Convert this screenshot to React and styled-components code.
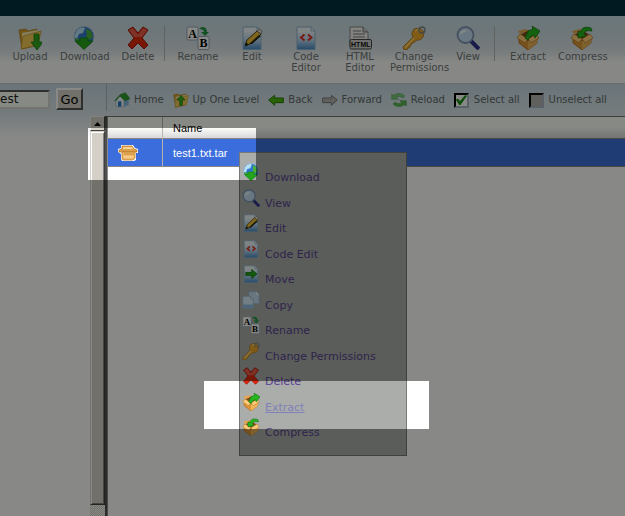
import React from 'react'
import styled, { createGlobalStyle, css } from 'styled-components'

const GlobalStyle = createGlobalStyle`
  * {
    box-sizing: border-box;
  }
  body {
    margin: 0;
    font-family: Verdana, "DejaVu Sans", sans-serif;
    font-size: 10px;
    color: #6e7478;
    background-color: #ffffff;
  }
`

const Page = styled.div`
  position: relative;
  display: flex;
  flex-direction: column;
  min-height: 100vh;
  overflow: hidden;
`

const TitleBar = styled.header`
  height: 16px;
  background-color: #002d3e;
`

const Toolbar = styled.nav`
  display: flex;
  align-items: flex-start;
  height: 68px;
  padding: 10px 0 0 3px;
  border-bottom: 1px solid #c4c9ca;
  background: linear-gradient(#c8dfe8 0px, #cddce6 16px, #dde4e9 34px, #fefefc 47px);
`

const ToolButton = styled.button`
  width: 54px;
  padding: 0 3px;
  border: none;
  background: none;
  font: inherit;
  line-height: 11px;
  color: inherit;
  text-align: center;
  cursor: pointer;

  svg {
    display: block;
    margin: 0 auto 1px;
  }
`

const ToolSeparator = styled.div`
  width: 1px;
  height: 35px;
  margin: 0 6px 0 -1px;
  background-color: #b4b8b4;
`

const NavRow = styled.div`
  display: flex;
  height: 32px;
  background: linear-gradient(#c6d8e4, #dde6ec);
`

const PathForm = styled.form`
  display: flex;
  align-items: center;
  gap: 6px;
  width: 106px;
  padding-bottom: 2px;
`

const PathInput = styled.input`
  width: 50px;
  height: 19px;
  padding: 0;
  border: 2px solid;
  border-left: none;
  border-color: #555 #d8d8d2 #d8d8d2;
  border-radius: 0;
  background-color: #fdfffb;
  font: inherit;
  font-size: 12px;
  color: #222;
`

const GoButton = styled.button`
  width: 27px;
  height: 22px;
  padding: 0;
  border: 2px solid;
  border-color: #ffffff #555 #555 #ffffff;
  background-color: #d4d0c8;
  font: inherit;
  font-size: 13px;
  color: #000;
`

const NavLinks = styled.div`
  display: flex;
  flex: 1;
  align-items: center;
  gap: 9px;
  height: 27px;
  padding: 5px 0 0 7px;
  border-left: 1px solid #a8b4ba;
`

const itemStyle = css`
  display: flex;
  align-items: center;
  gap: 4px;
  color: #5f666a;
  line-height: 16px;
  white-space: nowrap;
  text-decoration: none;
`

const NavLink = styled.a`
  ${itemStyle}
`

const CheckLabel = styled.label`
  ${itemStyle}
  gap: 5px;
`

const CheckBox = styled.input`
  appearance: none;
  display: grid;
  place-items: center;
  width: 15px;
  height: 15px;
  margin: 0;
  border: 2px solid;
  border-color: #000 #a9b4c4 #a9b4c4 #000;
  background-color: ${props => (props.$filled ? '#b4b4ae' : '#fdfffb')};

  &:checked::after {
    content: "";
    width: 11px;
    height: 11px;
    background-color: #189018;
    clip-path: polygon(0 45%, 20% 38%, 38% 60%, 85% 4%, 100% 14%, 42% 96%, 30% 96%);
  }
`

const Body = styled.div`
  display: flex;
  flex: 1;
`

const Sidebar = styled.aside`
  width: 90px;
  background: linear-gradient(#dde6ec, #ffffff 22px);
`

const ScrollBar = styled.div`
  display: flex;
  flex-direction: column;
  width: 17px;
  padding-bottom: 11px;
  border-right: 2px solid #505050;
  background: repeating-conic-gradient(#d4d0c8 0 25%, #ffffff 0 50%) 0 0 / 2px 2px;
`

const ScrollUp = styled.button`
  height: 15px;
  padding: 0;
  border: 1px solid;
  border-color: #f4f4f0 #444 #444 #f4f4f0;
  background-color: #d4d0c8;

  svg {
    display: block;
    margin: 0 auto;
  }
`

const ScrollThumb = styled.div`
  flex: 1;
  border: 1px solid;
  border-color: #d4d0c8 #404040 #404040 #d4d0c8;
  background-color: #d4d0c8;
  box-shadow: inset 1px 1px #ffffff, inset -1px -1px #808080;
`

const Content = styled.main`
  flex: 1;
  border-top: 1px solid #707878;
  border-left: 1px solid #8c8c88;
`

const FileTable = styled.table`
  width: 100%;
  border-collapse: separate;
  border-spacing: 0;
  table-layout: fixed;
  font-family: "Liberation Sans", Arial, sans-serif;
  font-size: 11px;
  text-align: left;

  tr > :first-child {
    width: 55px;
    padding-left: 10px;
    border-right: 1px solid #b8b4ac;
  }
`

const HeadCell = styled.th`
  height: 22px;
  padding: 0 10px;
  border-bottom: 1px solid #8c8680;
  background: linear-gradient(#fdfffb 50%, #d8d8da);
  font-weight: normal;
  color: #000;
`

const Cell = styled.td`
  height: 28px;
  padding: 0 10px;
  border-bottom: 1px solid #8c8680;
  background-color: #3b6edc;
  color: #fff;

  svg {
    display: block;
  }
`

const ContextMenu = styled.ul`
  position: absolute;
  top: 152px;
  left: 239px;
  width: 168px;
  margin: 0;
  padding: 10px 2px 11px;
  border: 1px solid #787878;
  background-color: #abadaa;
  list-style: none;
`

const MenuItem = styled.li`
  height: 26px;

  &:nth-child(even) {
    height: 25px;
  }
`

const MenuLink = styled.a`
  display: flex;
  align-items: baseline;
  gap: 5px;
  font-size: 11px;
  line-height: 16px;
  white-space: nowrap;
  color: ${props => (props.$active ? '#7f81b8' : '#573f90')};
  text-decoration: none;

  span {
    text-decoration: ${props => (props.$active ? 'underline' : 'none')};
  }
`

/* darkens everything except the selected file and the Extract entry */
const Shade = styled.div`
  position: absolute;
  inset: 0;
  pointer-events: none;
  background-color: rgba(2, 5, 0, 0.47);
  clip-path: polygon(
    evenodd,
    0 0, 100% 0, 100% 100%, 0 100%, 0 0,
    88px 128px, 256px 128px, 256px 180px, 88px 180px, 88px 128px,
    0 0,
    204px 381px, 429px 381px, 429px 429px, 204px 429px, 204px 381px,
    0 0
  );
`

const Sheet = ({ children }) => (
  <>
    <defs>
      <linearGradient id="sheet" x1="0" y1="0" x2="0" y2="1">
        <stop offset="0.2" stopColor="#eef5fb" />
        <stop offset="0.6" stopColor="#b4d2ee" />
        <stop offset="1" stopColor="#4488c8" />
      </linearGradient>
    </defs>
    <path d="M3 1h14l4 4v18.500H3z" fill="url(#sheet)" stroke="#8fb0cc" />
    <path d="M17 1v4h4z" fill="#fff" stroke="#8fb0cc" />
    {children}
  </>
)

const Box = () => (
  <>
    <path d="M3 10l9 5 9-5v7l-9 7-9-7z" fill="#dd9538" stroke="#a8681c" strokeWidth=".8" />
    <path d="M12 15v9l9-7v-7z" fill="#efb458" />
    <path d="M4 9l8-5 8 5-8 6z" fill="#7d4c18" />
    <path d="M4 8L1 12l8 5 3-4z" fill="#ffcc7c" stroke="#b87828" strokeWidth=".7" />
    <path d="M20 8l3 4-8 5-3-4z" fill="#ffcc7c" stroke="#b87828" strokeWidth=".7" />
    <path d="M4 8l-2-3 8-2 2 2z" fill="#e8a44c" />
  </>
)

const Folder = () => (
  <>
    <path d="M1 4l7-1 2 2 9-2v3l-2 14-13 3z" fill="#d59b28" stroke="#a87818" strokeWidth=".7" />
    <path d="M4 7l16-3v14l-16 4z" fill="#f8ecb4" />
    <path d="M5 10l18-5-3 14-17 4z" fill="#f5cb58" stroke="#c08c20" strokeWidth=".7" />
  </>
)

const icons = {
  upload: (
    <>
      <Folder />
      <path d="M16 8h5v8h4l-6 8-6-8h3z" fill="#2fa51f" stroke="#187a10" strokeWidth=".8" />
    </>
  ),
  upLevel: (
    <>
      <Folder />
      <path d="M12 5l6 7h-4v8h-4v-8H6z" fill="#38b020" stroke="#187a10" />
    </>
  ),
  download: (
    <>
      <circle cx="12" cy="10.500" r="10" fill="#2f78cc" stroke="#a8c0d8" />
      <path d="M4 6c3-5 7-5 9-4l-2 5-4 1-2 5-3-2z" fill="#b8e0f8" />
      <path d="M14 3l5 2 2 6-4 3-3-3 1-3zM3 12l4 1 1 5-3-1z" fill="#4caf38" />
      <path d="M8 12h8v3h5l-9 8.500L3 15h5z" fill="#24a51c" stroke="#128010" strokeWidth=".8" />
    </>
  ),
  remove: (
    <>
      <path d="M2 4l5-3 5 6 5-6 5 3-6 8 6 7-4 4-6-6-6 6-4-4 6-7z" fill="#e2280c" stroke="#a01408" />
      <path d="M3 4l4-2 5 7 5-7 4 2-5 7H8z" fill="#ee7466" opacity=".7" />
    </>
  ),
  rename: (
    <>
      <rect x="1" y="1" width="11" height="13" rx="1" fill="#fff" stroke="#9aa6b8" />
      <rect x="12" y="10.500" width="11" height="13" rx="1" fill="#fff" stroke="#9aa6b8" />
      <text x="6.500" y="11.500" fontFamily="Liberation Serif, serif" fontSize="12" fontWeight="bold" textAnchor="middle" fill="#000">A</text>
      <text x="17.500" y="21" fontFamily="Liberation Serif, serif" fontSize="12" fontWeight="bold" textAnchor="middle" fill="#000">B</text>
      <path d="M13 3c4-4 8-1 8 3h2l-4 4-4-4h3c0-2-2-3-5-3z" fill="#259848" />
    </>
  ),
  edit: (
    <Sheet>
      <path d="M5 20l2-6L17 5l4 3-9 9z" fill="#f0bc38" stroke="#51400c" />
      <path d="M17 5l2-2 3 2-1 3z" fill="#f0e4d4" stroke="#555" strokeWidth=".6" />
      <path d="M5 20l1-4 3 3zM9 18l10-9 2 1-9 8z" fill="#252014" />
    </Sheet>
  ),
  code: (
    <Sheet>
      <path d="M10.500 8.500L7 11.500l3.500 3M14 8.500l3.500 3-3.500 3" fill="none" stroke="#e02818" strokeWidth="1.800" />
    </Sheet>
  ),
  html: (
    <>
      <path d="M2 1h13l5 5v14H2z" fill="#f4f4f4" stroke="#888" />
      <path d="M15 1v5h5" fill="#ccc" stroke="#777" />
      <path d="M5 5h8M5 8h12M5 11h12" stroke="#a0a0a0" strokeWidth="1.500" />
      <rect x="2" y="13.500" width="21.500" height="9.500" rx="1.500" fill="#d0d0d0" stroke="#444" />
      <text x="12.800" y="21" fontFamily="Liberation Sans, sans-serif" fontSize="7" fontWeight="bold" textAnchor="middle" fill="#111">HTML</text>
    </>
  ),
  key: (
    <>
      <path d="M11 11L1 21l1 3h3l1-2 2-1 1-3 2-1 4-3c5 1 7-4 7-8L18 2l-6 1c-2 3-3 5-1 8z" fill="#f0a828" stroke="#a06c14" strokeWidth=".8" />
      <path d="M12 12L3 22M13 5l3-2" stroke="#ffd878" strokeWidth="1.500" />
      <circle cx="20" cy="4" r="3" fill="none" stroke="#7c848c" strokeWidth="1.300" />
    </>
  ),
  view: (
    <>
      <path d="M15 15l8 8" stroke="#30308c" strokeWidth="4" />
      <circle cx="9.500" cy="9" r="8" fill="#c2def5" stroke="#8294b4" strokeWidth="1.800" />
      <path d="M4 9c0-4 4-6 8-4-3 0-6 2-8 4z" fill="#fff" />
    </>
  ),
  extract: (
    <>
      <Box />
      <path d="M9 12l3-7 5-2-1-3 8 5-5 7-1-3-4 2-2 3z" fill="#25b51f" stroke="#12780f" strokeWidth=".8" />
    </>
  ),
  compress: (
    <>
      <Box />
      <path d="M21 2c-6-2-10 0-10 4L8 5v7l8-2-2-2c0-2 2-4 8-3z" fill="#25b51f" stroke="#12780f" strokeWidth=".8" />
    </>
  ),
  move: (
    <Sheet>
      <path d="M5 10h8V6l7 6-7 6v-4H5z" fill="#1fa51a" stroke="#127010" />
    </Sheet>
  ),
  copy: (
    <>
      <path d="M9 1h10l4 4v12H9z" fill="#c2dcf0" stroke="#8fb0cc" />
      <path d="M19 1v4h4z" fill="#fff" />
      <path d="M1 7h10l4 4v12H1z" fill="#d8eafa" stroke="#8fb0cc" />
      <path d="M1.500 18h13v4.500h-13z" fill="#8fbce4" />
      <path d="M11 7v4h4z" fill="#fff" stroke="#8fb0cc" />
    </>
  ),
  home: (
    <>
      <path d="M3 12l6-6 6 6v10H3z" fill="#f0f6fc" stroke="#7894b4" strokeWidth=".7" />
      <path d="M15 12l7-2v9l-7 3z" fill="#84b4e0" />
      <path d="M1 13L9 4l8-3 7 9-8 3-7-7-6 7z" fill="#2f9c2f" stroke="#207420" strokeWidth=".7" />
      <path d="M6 14h5v8H6z" fill="#2f78c0" />
    </>
  ),
  back: <path d="M1 12l9-7v4h13v7H10v4z" fill="#48b80c" stroke="#287808" strokeWidth="1.500" />,
  forward: <path d="M23 12l-9-7v4H1v7h13v4z" fill="#b4b4b4" stroke="#787878" strokeWidth="1.500" />,
  reload: (
    <>
      <path d="M1 3l3 2c5-4 12-4 17 1l-3 3c-4-3-7-3-10-1l3 3H1z" fill="#78c878" stroke="#489c48" strokeWidth=".7" />
      <path d="M23 21l-3-2c-5 4-12 4-17-1l3-3c4 3 7 3 10 1l-3-3h10z" fill="#58b450" stroke="#489c48" strokeWidth=".7" />
    </>
  ),
}

const Icon = ({ name, size = 16 }) => (
  <svg width={size} height={size} viewBox="0 0 24 24" aria-hidden="true">
    {icons[name]}
  </svg>
)

const ArchiveIcon = () => (
  <svg width="20" height="16" viewBox="0 0 20 16" aria-hidden="true">
    <path d="M3 0h12l2 3 3 1v4h-2v7l-2 1H4l-1-2V9L0 7V4l3-1z" fill="#fff" />
    <path d="M4 1h10l2 3 3 1v2H1V5l3-1z" fill="#dda04c" stroke="#b47424" strokeWidth=".7" />
    <path d="M5 2h9l1 2H5z" fill="#f8d494" />
    <path d="M4 7h13v6l-2 2H5l-1-2z" fill="#eeb96c" stroke="#b47424" strokeWidth=".7" />
    <path d="M6 9h10" stroke="#c8862c" />
    <path d="M6 12h9" stroke="#fce0a8" />
  </svg>
)

const toolGroups = [
  [
    ['upload', 'Upload'],
    ['download', 'Download'],
    ['remove', 'Delete'],
  ],
  [
    ['rename', 'Rename'],
    ['edit', 'Edit'],
    ['code', 'Code Editor'],
    ['html', 'HTML Editor'],
    ['key', 'Change Permissions'],
    ['view', 'View'],
  ],
  [
    ['extract', 'Extract'],
    ['compress', 'Compress'],
  ],
]

const navLinks = [
  ['home', 'Home'],
  ['upLevel', 'Up One Level'],
  ['back', 'Back'],
  ['forward', 'Forward'],
  ['reload', 'Reload'],
]

const menuItems = [
  ['download', 'Download'],
  ['view', 'View'],
  ['edit', 'Edit'],
  ['code', 'Code Edit'],
  ['move', 'Move'],
  ['copy', 'Copy'],
  ['rename', 'Rename'],
  ['key', 'Change Permissions'],
  ['remove', 'Delete'],
  ['extract', 'Extract'],
  ['compress', 'Compress'],
]

const App = () => {
  return (
    <>
      <GlobalStyle />
      <Page>
        <TitleBar />
        <Toolbar>
          {toolGroups.map((group, i) => (
            <React.Fragment key={i}>
              {i > 0 && <ToolSeparator />}
              {group.map(([icon, label]) => (
                <ToolButton key={label} type="button">
                  <Icon name={icon} size={24} />
                  {label}
                </ToolButton>
              ))}
            </React.Fragment>
          ))}
        </Toolbar>
        <NavRow>
          <PathForm onSubmit={e => e.preventDefault()}>
            <PathInput type="text" aria-label="Path" defaultValue="est" />
            <GoButton type="submit">Go</GoButton>
          </PathForm>
          <NavLinks>
            {navLinks.map(([icon, label]) => (
              <NavLink key={label} href="#">
                <Icon name={icon} />
                {label}
              </NavLink>
            ))}
            <CheckLabel>
              <CheckBox type="checkbox" defaultChecked />
              Select all
            </CheckLabel>
            <CheckLabel>
              <CheckBox type="checkbox" $filled />
              Unselect all
            </CheckLabel>
          </NavLinks>
        </NavRow>
        <Body>
          <Sidebar />
          <ScrollBar>
            <ScrollUp type="button" aria-label="Scroll up">
              <svg width="7" height="4" viewBox="0 0 7 4"><path d="M0 4l3.500-4L7 4z" /></svg>
            </ScrollUp>
            <ScrollThumb />
          </ScrollBar>
          <Content>
            <FileTable>
              <thead>
                <tr>
                  <HeadCell aria-label="Type" />
                  <HeadCell>Name</HeadCell>
                </tr>
              </thead>
              <tbody>
                <tr>
                  <Cell><ArchiveIcon /></Cell>
                  <Cell>test1.txt.tar</Cell>
                </tr>
              </tbody>
            </FileTable>
          </Content>
        </Body>
        <ContextMenu>
          {menuItems.map(([icon, label]) => (
            <MenuItem key={label}>
              <MenuLink href="#" $active={label === 'Extract'}>
                <Icon name={icon} size={18} />
                <span>{label}</span>
              </MenuLink>
            </MenuItem>
          ))}
        </ContextMenu>
        <Shade />
      </Page>
    </>
  )
}

export default App
